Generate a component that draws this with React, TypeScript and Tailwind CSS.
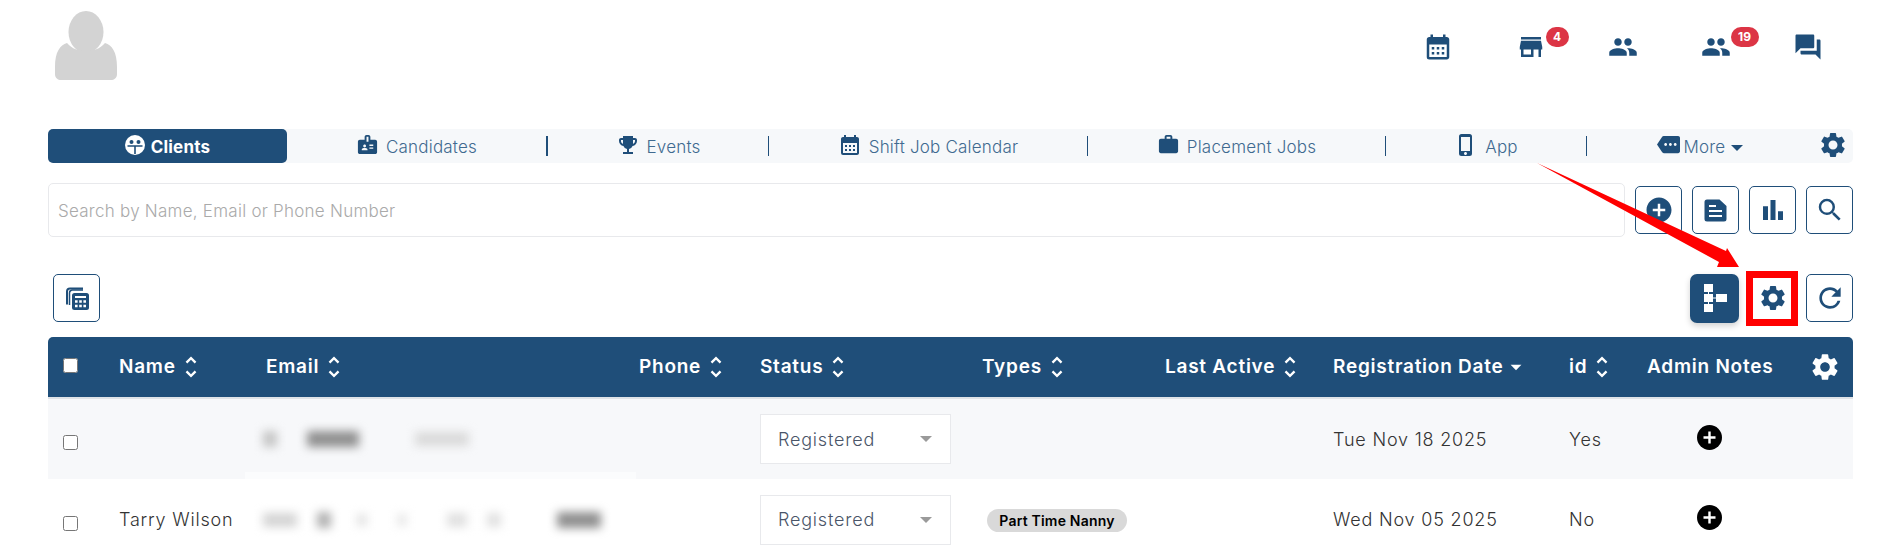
import React from "react";
import {
  MdCalendarMonth, MdStore, MdPeople, MdQuestionAnswer, MdBadge, MdEmojiEvents, MdWork,
  MdPhoneIphone, MdMore, MdSettings, MdArrowDropDown, MdAddCircle, MdOutlineBarChart,
  MdSearch, MdRefresh, MdUnfoldMore,
} from "react-icons/md";

const navy = "#1f4e79";

function Sep({ thick }: { thick?: boolean }) {
  return <span className={thick ? "h-5 w-[2px] shrink-0 bg-[#1f4e79]" : "h-5 w-px shrink-0 bg-[#1f4e79]"} />;
}

function Tab({ w, icon, label }: { w: string; icon: React.ReactNode; label: string }) {
  return (
    <div className={`flex h-full items-center justify-center gap-[7px] ${w}`}>
      <span className="-mt-[3px] flex">{icon}</span>
      <span className="pt-[3px]">{label}</span>
    </div>
  );
}

function HeadCell({ label, sort = true }: { label: string; sort?: boolean }) {
  return (
    <div className="flex items-center whitespace-nowrap">
      <span>{label}</span>
      {sort && <MdUnfoldMore size={28} className="-my-2 ml-px shrink-0" />}
    </div>
  );
}

function OutlineBtn({ children }: { children: React.ReactNode }) {
  return (
    <button className="flex h-12 w-[47px] shrink-0 items-center justify-center rounded-[5px] border-[1.5px] border-[#1f4e79] bg-white text-[#1f4e79]">
      {children}
    </button>
  );
}

function StatusSelect() {
  return (
    <div className="flex h-[50px] w-[191px] items-center justify-between border-[1.5px] border-[#e8e9ec] bg-white pl-[17px] pr-[18px] text-[#4a5568]">
      <span>Registered</span>
      <span className="h-0 w-0 border-x-[6px] border-t-[6px] border-x-transparent border-t-[#9a9a9a]" />
    </div>
  );
}

function PlusDot() {
  return (
    <svg width="25" height="25" viewBox="0 0 25 25" className="-mt-1 ml-[50px]">
      <circle cx="12.5" cy="12.5" r="12.5" fill="#000" />
      <path d="M12.5 6.5v12M6.5 12.5h12" stroke="#fff" strokeWidth="2.4" />
    </svg>
  );
}

const cols = "grid grid-cols-[56px_147px_373px_121px_222px_183px_168px_236px_78px_162px_44px] items-center pl-[15px]";

export default function App() {
  return (
    <div className="relative h-[556px] w-[1896px] overflow-hidden bg-white font-[Inter,sans-serif] text-[17px] font-light tracking-[0.2px]">
      {/* top bar */}
      <header className="flex h-[129px] items-start justify-between">
        <svg width="64" height="70" viewBox="0 0 64 70" className="ml-[54px] mt-[11px]">
          <ellipse cx="32" cy="21" rx="17.5" ry="21" fill="#d3d3d3" />
          <path d="M13 32c5 6 12 8 19 8s14-2 19-8c7 2 12 9 12 24v7c0 4-3 6-6 6H7c-3 0-6-2-6-6v-7c0-15 5-22 12-24z" fill="#d3d3d3" />
        </svg>
        <div className="mr-[73px] mt-8 flex gap-[62.5px] text-[#1f4e79]">
          <MdCalendarMonth size={30} />
          <div className="relative">
            <MdStore size={30} />
            <span className="absolute left-[30px] top-[-5px] flex h-5 w-[23px] items-center justify-center rounded-full bg-[#dc3545] text-[12px] font-bold tracking-normal text-white">4</span>
          </div>
          <MdPeople size={30} />
          <div className="relative">
            <MdPeople size={30} />
            <span className="absolute left-[30px] top-[-5px] flex h-5 w-[28px] items-center justify-center rounded-full bg-[#dc3545] text-[12px] font-bold tracking-normal text-white">19</span>
          </div>
          <MdQuestionAnswer size={30} />
        </div>
      </header>

      {/* tabs */}
      <nav className="ml-12 flex h-[34px] w-[1805px] items-center rounded-[5px] bg-[#f6f8fa] text-[#3f6a90]">
        <div className="flex h-full w-[239px] items-center justify-center gap-[6px] rounded-[5px] bg-[#1f4e79] font-bold text-white">
          <svg width="20" height="20" viewBox="0 0 20 20" className="-mt-[3px]">
            <circle cx="10" cy="10" r="10" fill="#fff" />
            <circle cx="6.5" cy="7" r="2" fill={navy} />
            <circle cx="13.5" cy="7" r="2" fill={navy} />
            <path d="M2.5 11h15M10 11v8" stroke={navy} strokeWidth="1.6" />
          </svg>
          <span className="pt-[3px]">Clients</span>
        </div>
        <Tab w="w-[259px]" icon={<MdBadge size={23} color={navy} />} label="Candidates" />
        <Sep thick />
        <Tab w="w-[220px]" icon={<MdEmojiEvents size={24} color={navy} />} label="Events" />
        <Sep />
        <Tab w="w-[318px]" icon={<MdCalendarMonth size={24} color={navy} />} label="Shift Job Calendar" />
        <Sep />
        <Tab w="w-[297px]" icon={<MdWork size={23} color={navy} />} label="Placement Jobs" />
        <Sep />
        <Tab w="w-[200px]" icon={<MdPhoneIphone size={24} color={navy} />} label="App" />
        <Sep />
        <div className="flex h-full w-[226px] items-center justify-center gap-[4px]">
          <span className="-mt-[3px] flex"><MdMore size={23} color={navy} /></span>
          <span className="pt-[3px]">More</span>
          <span className="ml-[2px] mt-[3px] h-0 w-0 border-x-[6px] border-t-[6px] border-x-transparent border-t-[#1f4e79]" />
        </div>
        <MdSettings size={30} color={navy} className="-mt-[2px] ml-[5px]" />
      </nav>

      {/* search */}
      <div className="ml-12 mt-5 flex h-[54px] w-[1805px] items-center gap-[10px]">
        <input
          placeholder="Search by Name, Email or Phone Number"
          className="h-full flex-1 rounded-[5px] border-[1.5px] border-[#e8e9ec] bg-white pl-[9px] pt-[2px] font-light tracking-[0.25px] placeholder:text-[#aaaaaa]"
        />
        <OutlineBtn><MdAddCircle size={30} /></OutlineBtn>
        <OutlineBtn>
          <svg width="23" height="23" viewBox="0 0 23 23">
            <path d="M3 .5h12.5L22.5 7v13a2.5 2.5 0 0 1-2.5 2.5H3A2.5 2.5 0 0 1 .5 20V3A2.5 2.5 0 0 1 3 .5z" fill={navy} />
            <path d="M5 7h7M5 12h13M5 17h13" stroke="#fff" strokeWidth="2" />
          </svg>
        </OutlineBtn>
        <OutlineBtn><MdOutlineBarChart size={30} /></OutlineBtn>
        <OutlineBtn><MdSearch size={30} /></OutlineBtn>
      </div>

      {/* toolbar */}
      <div className="ml-12 mt-[37px] flex h-12 w-[1805px] items-center justify-between">
        <div className="ml-[5px]">
          <OutlineBtn>
            <svg width="24" height="24" viewBox="0 0 24 24">
              <path d="M18 2.5H5A3 3 0 0 0 2 5.5v13" fill="none" stroke={navy} strokeWidth="2" />
              <path d="M4.5 19V7A3 3 0 0 1 7.5 4H18" fill="none" stroke={navy} strokeWidth="1.5" />
              <rect x="7" y="7" width="17" height="17" rx="2.5" fill={navy} />
              <path d="M10 11h11" stroke="#fff" strokeWidth="2" />
              <path d="M10 15.5h2.6M14.2 15.5h2.6M18.4 15.5H21M10 20h2.6M14.2 20h2.6M18.4 20H21" stroke="#fff" strokeWidth="2.4" />
            </svg>
          </OutlineBtn>
        </div>
        <div className="flex items-center gap-[10px]">
          <button className="flex h-[49px] w-[49px] items-center justify-center rounded-[7px] bg-[#1f4e79] shadow-[0_3px_6px_rgba(0,0,0,0.18)]">
            <svg width="24" height="30" viewBox="0 0 24 30" fill="#fff">
              <rect x="1" y="1" width="9" height="8" />
              <rect x="5" y="9" width="1" height="2" />
              <rect x="1" y="11" width="9" height="8" />
              <rect x="5" y="19" width="1" height="2" />
              <rect x="1" y="21" width="9" height="8" />
              <rect x="10" y="14.5" width="3" height="1" />
              <rect x="13" y="11" width="11" height="8" />
            </svg>
          </button>
          <button className="relative flex h-12 w-[47px] items-center justify-center bg-white text-[#1f4e79]">
            <MdSettings size={30} />
            <span className="absolute -bottom-1 -left-[3px] -right-[2px] -top-[3px] border-[7px] border-[#ff0000]" />
          </button>
          <OutlineBtn><MdRefresh size={32} /></OutlineBtn>
        </div>
      </div>

      {/* table */}
      <section className="ml-12 mt-[15px] w-[1805px] text-[18px] tracking-[0.8px]">
        <div className={`${cols} h-[60px] rounded-t-[5px] bg-[#1f4e79] text-[19px] font-semibold tracking-[0.75px] text-white`}>
          <input type="checkbox" className="-mt-[3px] h-[15px] w-[15px]" />
          <HeadCell label="Name" />
          <HeadCell label="Email" />
          <HeadCell label="Phone" />
          <HeadCell label="Status" />
          <HeadCell label="Types" />
          <HeadCell label="Last Active" />
          <div className="flex items-center whitespace-nowrap">
            <span>Registration Date</span>
            <MdArrowDropDown size={26} className="-my-2 shrink-0" />
          </div>
          <HeadCell label="id" />
          <HeadCell label="Admin Notes" sort={false} />
          <MdSettings size={32} />
        </div>
        <div className="h-[2px] bg-[#dfe3e8]" />

        <div className={`${cols} h-20 bg-[#f7f8fa] text-[#333333]`}>
          <input type="checkbox" className="mt-[7px] h-[15px] w-[15px]" />
          <span />
          <div className="-ml-[3px] flex h-[22px] items-center" aria-hidden>
            <span className="h-[16px] w-[14px] bg-[#c4c4c4] blur-[5px]" />
            <span className="ml-[30px] h-[16px] w-[52px] bg-[#8f8f8f] blur-[5px]" />
            <span className="ml-[56px] h-[14px] w-[54px] bg-[#dadada] blur-[5px]" />
          </div>
          <span />
          <StatusSelect />
          <span />
          <span />
          <span className="whitespace-nowrap">Tue Nov 18 2025</span>
          <span>Yes</span>
          <PlusDot />
          <span />
        </div>

        <div className={`${cols} h-[81px] bg-white text-[#333333]`}>
          <input type="checkbox" className="mt-[7px] h-[15px] w-[15px]" />
          <span className="whitespace-nowrap">Tarry Wilson</span>
          <div className="-ml-[3px] flex h-[22px] items-center" aria-hidden>
            <span className="h-[14px] w-[34px] bg-[#d4d4d4] blur-[5px]" />
            <span className="ml-[20px] h-[16px] w-[14px] bg-[#b0b0b0] blur-[5px]" />
            <span className="ml-[26px] h-[12px] w-[10px] bg-[#e2e2e2] blur-[5px]" />
            <span className="ml-[30px] h-[12px] w-[10px] bg-[#e8e8e8] blur-[5px]" />
            <span className="ml-[40px] h-[14px] w-[20px] bg-[#e0e0e0] blur-[5px]" />
            <span className="ml-[20px] h-[14px] w-[14px] bg-[#e0e0e0] blur-[5px]" />
            <span className="ml-[56px] h-[16px] w-[44px] bg-[#8f8f8f] blur-[5px]" />
          </div>
          <span />
          <StatusSelect />
          <span className="ml-[5px] flex h-[23px] w-[140px] translate-y-px items-center justify-center rounded-full bg-[#d9d9d9] text-[14px] font-semibold tracking-[0.2px] text-black">
            Part Time Nanny
          </span>
          <span />
          <span className="whitespace-nowrap">Wed Nov 05 2025</span>
          <span>No</span>
          <PlusDot />
          <span />
        </div>
      </section>

      {/* faint patch left by the blur over the rows */}
      <div className="absolute left-[245px] top-[472px] h-[18px] w-[391px] bg-white/50" />

      {/* annotation arrow */}
      <svg className="pointer-events-none absolute left-0 top-0" width="1896" height="556">
        <polygon points="1537,163 1726,251 1727,248 1739,267 1717,267 1719,262" fill="#ff0000" />
      </svg>
    </div>
  );
}
